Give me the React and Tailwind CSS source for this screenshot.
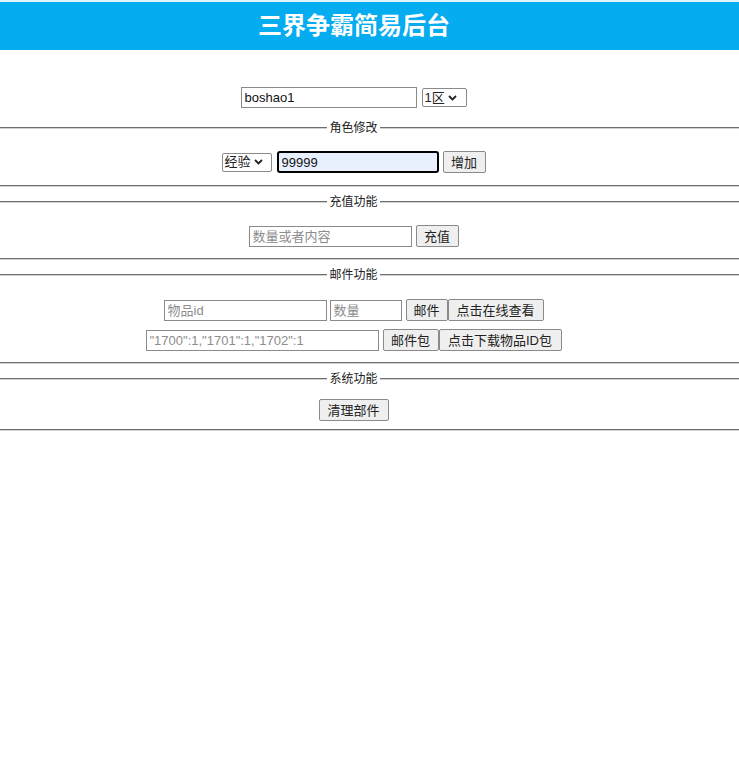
import { useState } from 'react';

const inputCls =
  'h-[21px] border border-[#8a8a8a] bg-white px-[3px] text-[13px] text-[#111] placeholder:text-[#8d8d8d] outline-none';
const btnCls =
  'h-[22px] border border-[#8a8a8a] rounded-[2px] bg-[#efefef] px-[6px] text-[13px] text-[#222] leading-none';

function Chevron() {
  return (
    <svg width="9" height="6" viewBox="0 0 9 6" className="ml-[3px]">
      <path d="M1 1 L4.5 4.5 L8 1" fill="none" stroke="#222" strokeWidth="1.8" />
    </svg>
  );
}

function FakeSelect({ value, width }) {
  return (
    <div
      className={`flex h-[19px] items-center border border-[#8a8a8a] rounded-[2px] bg-white pl-[2px] text-[13px] text-[#222] ${width}`}
    >
      <span>{value}</span>
      <Chevron />
    </div>
  );
}

function Legend({ title }) {
  return (
    <div className="grid h-[14px] grid-cols-[1fr_auto_1fr_32px] items-center">
      <div className="h-[2px] border-t border-t-[#6e6e6e] border-b border-b-[#d2d2d2]" />
      <span className="px-[2px] text-[12px] leading-[14px] text-[#222]">{title}</span>
      <div className="h-[2px] border-t border-t-[#6e6e6e] border-b border-b-[#d2d2d2]" />
      <div className="h-[2px] border-t border-t-[#6e6e6e] border-b border-b-[#d2d2d2]" />
    </div>
  );
}

function Rule({ top }) {
  return <div className={`h-[2px] border-t border-t-[#6e6e6e] border-b border-b-[#d2d2d2] ${top}`} />;
}

export default function App() {
  const [account, setAccount] = useState('boshao1');
  const [amount, setAmount] = useState('99999');

  return (
    <div className="min-h-screen bg-white font-['Liberation_Sans','Noto_Sans_CJK_SC',sans-serif]">
      <div className="border-t-2 border-[#dff3fd] bg-[#06acf0]">
        <h1 className="flex h-[48px] items-center justify-center pr-[31px] text-[24px] font-bold text-white">
          三界争霸简易后台
        </h1>
      </div>

      <div className="mt-[37px] flex items-center justify-center gap-[5px] pr-[32px]">
        <input
          className={`${inputCls} w-[176px]`}
          value={account}
          onChange={(e) => setAccount(e.target.value)}
        />
        <FakeSelect value="1区" width="w-[45px]" />
      </div>

      <div className="mt-[13px]">
        <Legend title="角色修改" />
      </div>
      <div className="mt-[16px] flex items-center justify-center pr-[32px]">
        <FakeSelect value="经验" width="w-[50px]" />
        <input
          className="ml-[5px] h-[22px] w-[162px] rounded-[3px] border-2 border-black bg-[#e8f0fe] px-[3px] text-[13px] text-[#111] outline-none"
          value={amount}
          onChange={(e) => setAmount(e.target.value)}
        />
        <button className={`${btnCls} ml-[4px] w-[43px]`}>增加</button>
      </div>
      <Rule top="mt-[12px]" />

      <div className="mt-[8px]">
        <Legend title="充值功能" />
      </div>
      <div className="mt-[16px] flex items-center justify-center pr-[32px]">
        <input className={`${inputCls} w-[163px]`} placeholder="数量或者内容" />
        <button className={`${btnCls} ml-[4px] w-[43px]`}>充值</button>
      </div>
      <Rule top="mt-[11px]" />

      <div className="mt-[8px]">
        <Legend title="邮件功能" />
      </div>
      <div className="mt-[17px] flex items-center justify-center pr-[32px]">
        <input className={`${inputCls} w-[163px]`} placeholder="物品id" />
        <input className={`${inputCls} ml-[3px] w-[72px]`} placeholder="数量" />
        <button className={`${btnCls} ml-[4px] w-[42px]`}>邮件</button>
        <button className={`${btnCls} w-[96px]`}>点击在线查看</button>
      </div>
      <div className="mt-[8px] flex items-center justify-center pr-[32px]">
        <input
          className={`${inputCls} w-[233px]`}
          placeholder={'"1700":1,"1701":1,"1702":1'}
        />
        <button className={`${btnCls} ml-[4px] w-[56px]`}>邮件包</button>
        <button className={`${btnCls} w-[123px]`}>点击下载物品ID包</button>
      </div>
      <Rule top="mt-[11px]" />

      <div className="mt-[8px]">
        <Legend title="系统功能" />
      </div>
      <div className="mt-[13px] flex items-center justify-center pr-[32px]">
        <button className={`${btnCls} w-[70px]`}>清理部件</button>
      </div>
      <Rule top="mt-[8px]" />
    </div>
  );
}
